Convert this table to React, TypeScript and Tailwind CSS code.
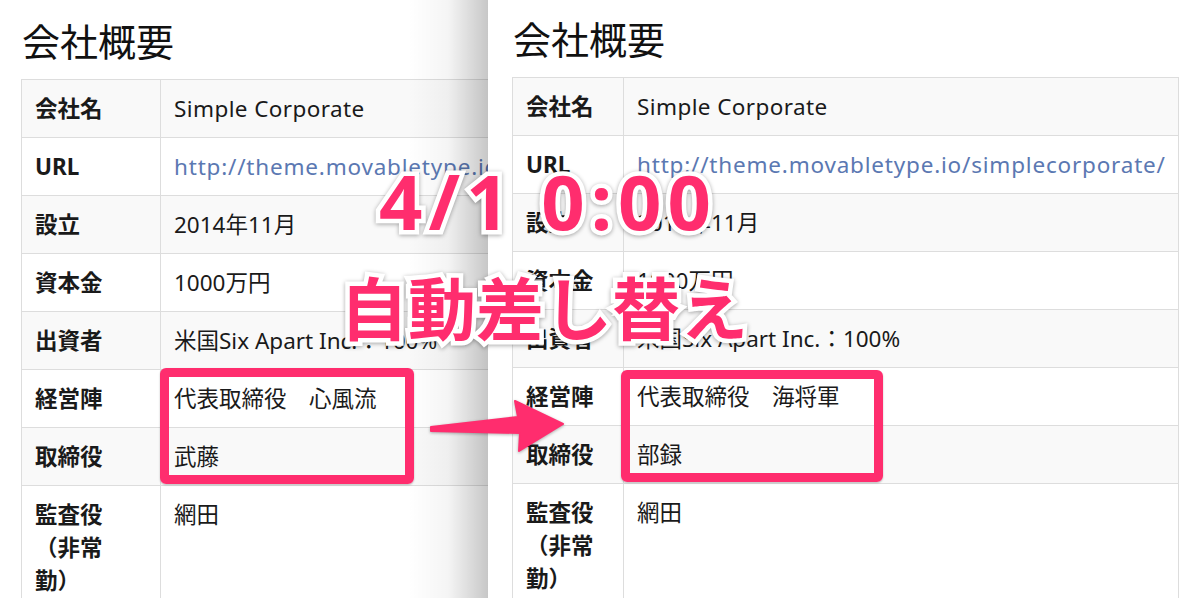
const font = { fontFamily: '"Noto Sans", "Noto Sans CJK JP", sans-serif' };

type Row = { label: React.ReactNode; value: React.ReactNode };

function rowsFor(exec: string, director: string): Row[] {
  return [
    { label: "会社名", value: <span className="tracking-[0.4px]">Simple Corporate</span> },
    {
      label: "URL",
      value: (
        <a href="#" className="text-[#5b78b2] whitespace-nowrap tracking-[0.8px]">
          http://theme.movabletype.io/simplecorporate/
        </a>
      ),
    },
    { label: "設立", value: "2014年11月" },
    { label: "資本金", value: "1000万円" },
    { label: "出資者", value: <span className="whitespace-nowrap">米国Six Apart Inc.：100%</span> },
    { label: "経営陣", value: exec },
    { label: "取締役", value: director },
    {
      label: (
        <>
          監査役
          <br />
          （非常
          <br />
          勤）
        </>
      ),
      value: "網田",
    },
  ];
}

function InfoTable({ rows, labelWidth, width }: { rows: Row[]; labelWidth: string; width: string }) {
  return (
    <table className={`table-fixed border-collapse ${width}`}>
      <colgroup>
        <col className={labelWidth} />
        <col />
      </colgroup>
      <tbody>
        {rows.map((r, i) => (
          <tr key={i} className={i % 2 === 0 ? "bg-[#f9f9f9]" : "bg-white"}>
            <th className="border border-[#dddddd] px-[13px] py-[12px] text-left align-top font-bold text-[#1a1a1a] leading-[33px]">
              {r.label}
            </th>
            <td className="border border-[#dddddd] px-[13px] py-[12px] align-top text-[#1a1a1a] leading-[33px]">
              {r.value}
            </td>
          </tr>
        ))}
      </tbody>
    </table>
  );
}

export default function App() {
  return (
    <div className="relative w-[1200px] h-[598px] overflow-hidden bg-white text-[22.5px]" style={font}>
      <div className="flex h-full">
        {/* left page (before) */}
        <div className="relative w-[488px] shrink-0 overflow-hidden pl-[21px] pt-[22px]">
          <h2 className="text-[38px] leading-none mb-[19px] ml-px text-[#111]">会社概要</h2>
          <InfoTable rows={rowsFor("代表取締役　心風流", "武藤")} labelWidth="w-[139px]" width="w-[700px]" />
          <div className="absolute top-0 right-0 h-full w-[80px] bg-gradient-to-r from-transparent via-black/[0.04] to-black/[0.22]" />
        </div>

        {/* right page (after) */}
        <div className="flex-1 pl-[24px] pr-[21px] pt-[20px] bg-white">
          <h2 className="text-[38px] leading-none mb-[19px] ml-px text-[#111]">会社概要</h2>
          <InfoTable rows={rowsFor("代表取締役　海将軍", "部録")} labelWidth="w-[111px]" width="w-full" />
        </div>
      </div>

      {/* highlight boxes */}
      <div className="absolute left-[160px] top-[368px] w-[254px] h-[116px] border-[9px] border-[#ff2d6e] rounded-[6px] shadow-[0_1px_2px_rgba(0,0,0,0.25)]" />
      <div className="absolute left-[621px] top-[370px] w-[262px] h-[112px] border-[9px] border-[#ff2d6e] rounded-[6px] shadow-[0_1px_2px_rgba(0,0,0,0.25)]" />

      {/* arrow */}
      <svg className="absolute left-0 top-0 pointer-events-none" width="1200" height="598" viewBox="0 0 1200 598">
        <path
          d="M431 427 L518 417 L515 401 L563 424 L519 451 L520 433 L431 431 Z"
          fill="#ff2d6e"
          stroke="#ff2d6e"
          strokeWidth="2"
          strokeLinejoin="round"
          style={{ filter: "drop-shadow(0 1px 1.5px rgba(0,0,0,0.3))" }}
        />
      </svg>

      {/* caption */}
      <div className="absolute left-[379px] top-[163px] text-[76px] leading-none tracking-[6px] font-bold text-[#ff2d6e] whitespace-nowrap [paint-order:stroke_fill] [-webkit-text-stroke:9px_white] drop-shadow-[0_1px_2px_rgba(0,0,0,0.35)]">
        4/1 0:00
      </div>
      <div className="absolute left-[340px] top-[275px] text-[68px] leading-none font-bold text-[#ff2d6e] whitespace-nowrap [paint-order:stroke_fill] [-webkit-text-stroke:9px_white] drop-shadow-[0_1px_2px_rgba(0,0,0,0.35)]">
        自動差し替え
      </div>
    </div>
  );
}
